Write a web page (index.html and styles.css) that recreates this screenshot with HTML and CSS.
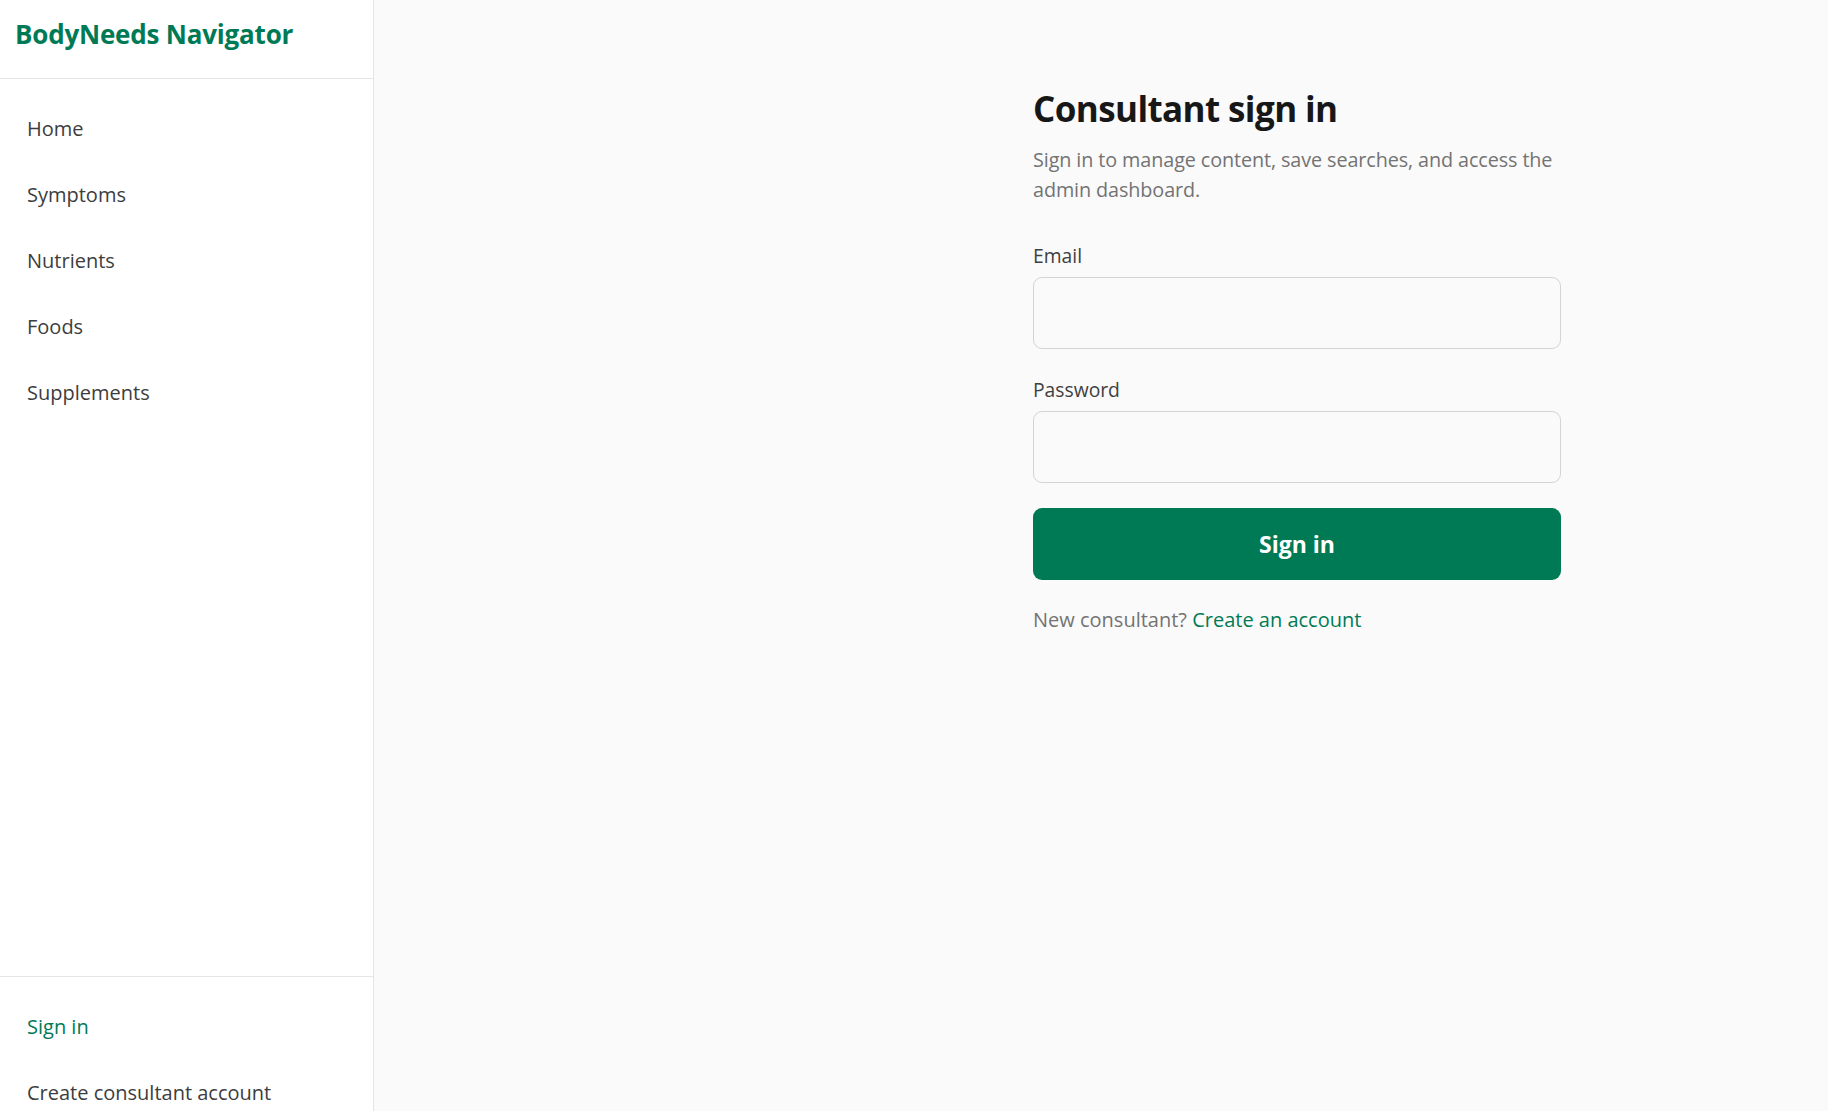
FILE: index.html
```html
<!DOCTYPE html>
<html lang="en">
<head>
<meta charset="utf-8">
<title>Consultant sign in · BodyNeeds Navigator</title>
<link rel="stylesheet" href="styles.css">
</head>
<body>
<aside class="sidebar">
  <div class="brand">BodyNeeds Navigator</div>
  <nav class="nav">
    <a class="nav-link" href="#">Home</a>
    <a class="nav-link" href="#">Symptoms</a>
    <a class="nav-link" href="#">Nutrients</a>
    <a class="nav-link" href="#">Foods</a>
    <a class="nav-link" href="#">Supplements</a>
  </nav>
  <div class="sidebar-footer">
    <a class="nav-link active" href="#">Sign in</a>
    <a class="nav-link" href="#">Create consultant account</a>
  </div>
</aside>
<main class="main">
  <section class="panel">
    <h1 class="title">Consultant sign in</h1>
    <p class="lead">Sign in to manage content, save searches, and access the admin dashboard.</p>
    <form class="form">
      <div class="field">
        <label class="label" for="email">Email</label>
        <input class="input" id="email" type="email">
      </div>
      <div class="field">
        <label class="label" for="password">Password</label>
        <input class="input" id="password" type="password">
      </div>
      <button class="button" type="button">Sign in</button>
    </form>
    <p class="note">New consultant? <a class="link" href="#">Create an account</a></p>
  </section>
</main>
</body>
</html>
```

FILE: styles.css
```css
* { box-sizing: border-box; }

html, body {
  margin: 0;
  height: 100%;
}

body {
  display: flex;
  align-items: flex-start;
  background: #fafafa;
  font-family: "Open Sans", "Noto Sans", sans-serif;
  color: #3d3d3d;
  overflow: hidden;
}

.sidebar {
  flex: 0 0 374px;
  width: 374px;
  height: 1142px;
  background: #ffffff;
  border-right: 1px solid #e5e5e5;
  display: flex;
  flex-direction: column;
}

.brand {
  height: 79px;
  border-bottom: 1px solid #e5e5e5;
  padding: 0 15px 11px;
  display: flex;
  align-items: center;
  color: #007a55;
  font-weight: 700;
  font-size: 26px;
  letter-spacing: -0.2px;
}

.nav {
  flex: 1;
  padding: 17px 0 16px;
  display: flex;
  flex-direction: column;
}

.sidebar-footer {
  border-top: 1px solid #e5e5e5;
  padding: 17px 0 16px;
  display: flex;
  flex-direction: column;
}

.nav-link {
  display: block;
  padding: 18px 27px;
  line-height: 30px;
  font-size: 20px;
  color: #3d3d3d;
  text-decoration: none;
}

.nav-link.active {
  color: #007a55;
}

.main {
  flex: 1;
  padding-top: 87px;
}

.panel {
  width: 528px;
  margin-left: 659px;
}

.title {
  margin: 0;
  font-size: 35px;
  line-height: 43px;
  font-weight: 700;
  color: #171717;
  letter-spacing: -0.6px;
}

.lead {
  margin: 15px 0 0;
  font-size: 19.8px;
  line-height: 30px;
  letter-spacing: -0.1px;
  color: #737373;
}

.form {
  margin-top: 37px;
  display: flex;
  flex-direction: column;
  gap: 27px;
}

.field {
  display: flex;
  flex-direction: column;
  gap: 7px;
}

.label {
  font-size: 19.3px;
  line-height: 28px;
  color: #404040;
}

.input {
  height: 72px;
  width: 100%;
  border: 1px solid #d4d4d4;
  border-radius: 9px;
  background: transparent;
  font: inherit;
  padding: 0 16px;
}

.button {
  margin-top: -2px;
  height: 72px;
  border: 0;
  border-radius: 9px;
  background: #007a55;
  color: #ffffff;
  font-family: inherit;
  font-size: 23px;
  font-weight: 700;
}

.note {
  margin: 25px 0 0;
  font-size: 20px;
  line-height: 30px;
  color: #737373;
}

.link {
  color: #007a55;
  text-decoration: none;
}
```
